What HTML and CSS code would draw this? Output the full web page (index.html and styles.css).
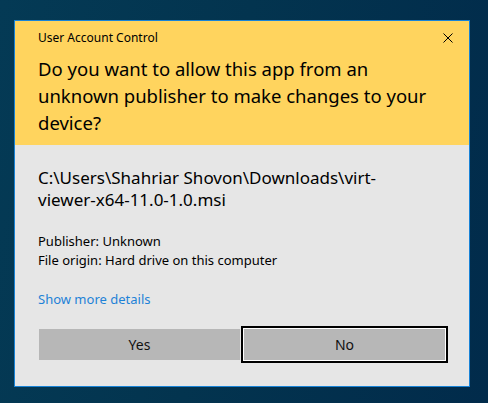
FILE: index.html
```html
<!DOCTYPE html>
<html>
<head>
    <meta charset="utf-8">
    <title>User Account Control</title>
    <link rel="stylesheet" href="styles.css">
</head>
<body>
    <div class="desktop">
        <div class="uac">
            <div class="uac-header">
                <div class="titlebar">
                    <span class="title">User Account Control</span>
                    <div class="close-btn">
                        <svg width="10" height="10" viewBox="0 0 10 10">
                            <path d="M0.5 0.5 L9.5 9.5 M9.5 0.5 L0.5 9.5" stroke="#000" stroke-width="1" fill="none"/>
                        </svg>
                    </div>
                </div>
                <h1>Do you want to allow this app from an unknown publisher to make changes to your device?</h1>
            </div>
            <div class="uac-body">
                <p class="program">C:\Users\Shahriar Shovon\Downloads\virt-viewer-x64-11.0-1.0.msi</p>
                <div class="details">
                    <div>Publisher: Unknown</div>
                    <div>File origin: Hard drive on this computer</div>
                </div>
                <a class="more-link">Show more details</a>
                <div class="buttons">
                    <div class="btn">Yes</div>
                    <div class="btn focused">No</div>
                </div>
            </div>
        </div>
    </div>
</body>
</html>
```

FILE: styles.css
```css
body {
    margin: 0;
    font-family: 'Noto Sans', 'Open Sans', sans-serif;
    color: #000;
    width: 488px;
    height: 403px;
    overflow: hidden;
}

.desktop {
    height: 403px;
    padding: 20px 0 0 14px;
    box-sizing: border-box;
    background: linear-gradient(100deg, #043a55 0%, #03344f 45%, #012b4b 100%);
}

.uac {
    width: 456px;
    height: 367px;
    box-sizing: border-box;
    border: 1px solid #1883d7;
    background: #e6e6e6;
    display: flex;
    flex-direction: column;
}

.uac-header {
    background: #ffd45e;
    height: 124px;
    padding: 8px 16px 0 23px;
    box-sizing: border-box;
}

.titlebar {
    display: flex;
    justify-content: space-between;
    align-items: center;
    height: 16px;
}

.title {
    font-size: 12px;
}

.close-btn {
    width: 10px;
    height: 10px;
    margin-top: 2px;
    line-height: 0;
}

.uac-header h1 {
    margin: 10px 0 0 0;
    font-size: 18.5px;
    font-weight: 400;
    line-height: 27px;
    width: 396px;
}

.uac-body {
    padding: 22px 24px 0 23px;
}

/* the path wraps in a narrower column than the heading */
.program {
    margin: 0;
    max-width: 380px;
    font-size: 17px;
    line-height: 22px;
}

.details {
    margin-top: 21px;
    font-size: 13px;
    line-height: 19px;
}

.more-link {
    display: block;
    margin-top: 20px;
    font-size: 13px;
    line-height: 19px;
    color: #1e82d7;
    cursor: pointer;
}

.buttons {
    display: flex;
    gap: 4px;
    margin: 20px 0 0 1px;
}

.btn {
    flex: 1;
    height: 31px;
    background: #b7b7b7;
    font-size: 14px;
    line-height: 31px;
    text-align: center;
    color: #111;
}

/* default button: white inner line plus black focus ring */
.btn.focused {
    box-shadow: 0 0 0 1px #fff, 0 0 0 3px #000;
}
```
